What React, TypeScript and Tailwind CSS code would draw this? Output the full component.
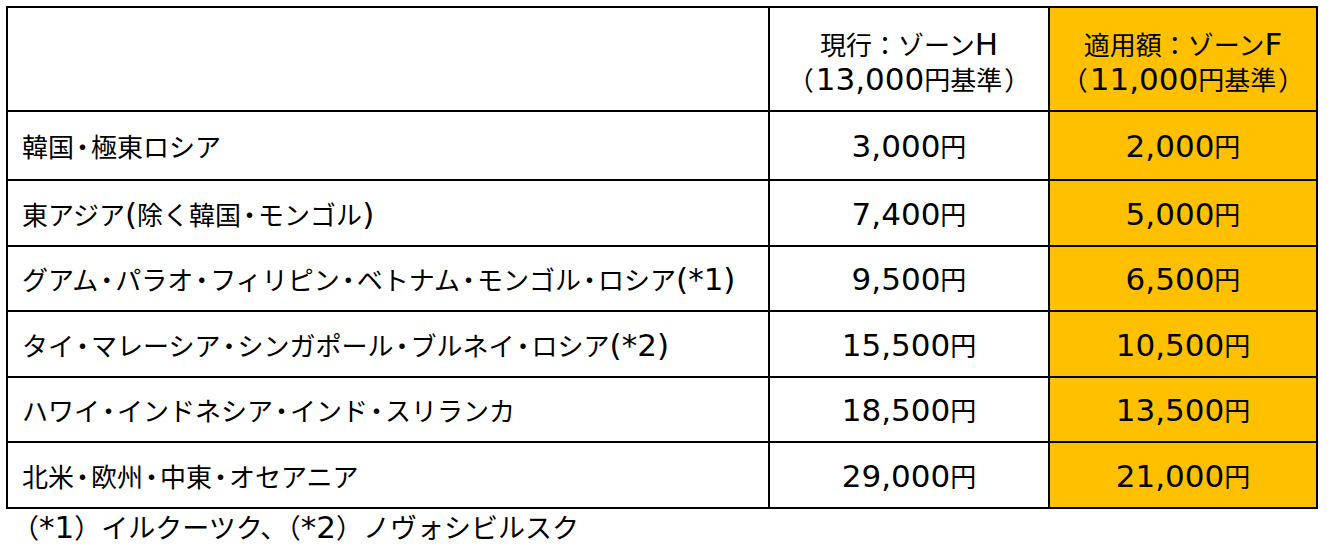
import type { ReactNode } from "react";

// Latin runs (digits, parens, colon) are set larger, the way Meiryo draws them
const L = ({ children }: { children: ReactNode }) => (
  <span className="font-['DejaVu_Sans',sans-serif] text-[31px] leading-none">{children}</span>
);

// narrow middle dot (half-width form via the 'halt' feature)
const Dot = () => <span className="[font-feature-settings:'halt'] mx-[2px]">・</span>;

const join = (parts: string[]) =>
  parts.map((p, i) => (
    <span key={i}>
      {i > 0 && <Dot />}
      {p}
    </span>
  ));

const rows: { name: ReactNode; cur: string; next: string; h: string }[] = [
  { name: join(["韓国", "極東ロシア"]), cur: "3,000", next: "2,000", h: "h-[69px]" },
  {
    name: (
      <>
        東アジア<L>(</L>除く韓国<Dot />モンゴル<L>)</L>
      </>
    ),
    cur: "7,400",
    next: "5,000",
    h: "h-[66px]",
  },
  {
    name: (
      <>
        {join(["グアム", "パラオ", "フィリピン", "ベトナム", "モンゴル", "ロシア"])}
        <L>(*1)</L>
      </>
    ),
    cur: "9,500",
    next: "6,500",
    h: "h-[65px]",
  },
  {
    name: (
      <>
        {join(["タイ", "マレーシア", "シンガポール", "ブルネイ", "ロシア"])}
        <L>(*2)</L>
      </>
    ),
    cur: "15,500",
    next: "10,500",
    h: "h-[66px]",
  },
  { name: join(["ハワイ", "インドネシア", "インド", "スリランカ"]), cur: "18,500", next: "13,500", h: "h-[65px]" },
  { name: join(["北米", "欧州", "中東", "オセアニア"]), cur: "29,000", next: "21,000", h: "h-[66px]" },
];

export default function App() {
  return (
    <div
      className="w-[1329px] h-[555px] bg-white text-black pl-[6px] pt-[6px] text-[26px]"
      style={{ fontFamily: '"Noto Sans CJK JP", "Noto Sans", sans-serif' }}
    >
      <table className="border-collapse border-[2px] border-black table-fixed w-[1310px]">
        <colgroup>
          <col className="w-[762px]" />
          <col className="w-[280px]" />
          <col className="w-[268px]" />
        </colgroup>
        <thead>
          <tr className="h-[104px]">
            <th className="border-[2px] border-black"></th>
            <th className="border-[2px] border-black font-normal text-center pt-[4px]">
              <div className="leading-[35px]">
                現行：ゾーン<L>H</L>
              </div>
              <div className="leading-[35px] whitespace-nowrap">
                （<span className="mx-[2px]"><L>13,000</L>円基準</span>）
              </div>
            </th>
            <th className="border-[2px] border-black bg-[#ffc000] font-normal text-center pt-[4px]">
              <div className="leading-[35px]">
                適用額：ゾーン<L>F</L>
              </div>
              <div className="leading-[35px] whitespace-nowrap">
                （<span className="mx-[2px]"><L>11,000</L>円基準</span>）
              </div>
            </th>
          </tr>
        </thead>
        <tbody>
          {rows.map((r) => (
            <tr key={r.cur} className={r.h}>
              <td className="border-[2px] border-black pl-[14px] whitespace-nowrap">{r.name}</td>
              <td className="border-[2px] border-black text-center">
                <L>{r.cur}</L>円
              </td>
              <td className="border-[2px] border-black bg-[#ffc000] text-center">
                <L>{r.next}</L>円
              </td>
            </tr>
          ))}
        </tbody>
      </table>
      <p className="pl-[6px] leading-[36px] text-[27px]">
        （<L>*1</L>）イルクーツク、（<L>*2</L>）ノヴォシビルスク
      </p>
    </div>
  );
}
